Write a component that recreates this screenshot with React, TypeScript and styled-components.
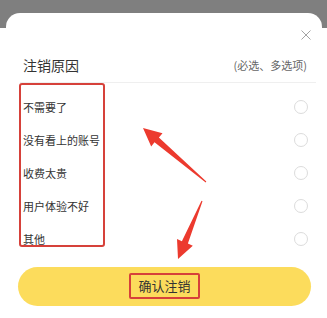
import styled, { createGlobalStyle } from 'styled-components';

const reasons = ['不需要了', '没有看上的账号', '收费太贵', '用户体验不好', '其他'];

const GlobalStyle = createGlobalStyle`
    body {
        margin: 0;
        background: #fff;
        font-family: "Noto Sans CJK SC", "Noto Sans", sans-serif;
    }
`

const App = () => {
    return (
        <Page>
            <GlobalStyle />
            <Sheet>
                <CloseRow>
                    <svg width="10" height="10" viewBox="0 0 10 10">
                        <path d="M0.5 0.5 L9.5 9.5 M9.5 0.5 L0.5 9.5" stroke="#a3a3a3" strokeWidth="1" fill="none" />
                    </svg>
                </CloseRow>
                <Header>
                    <Title>注销原因</Title>
                    <Hint>(必选、多选项)</Hint>
                </Header>
                <OptionList>
                    {reasons.map((r) => (
                        <Option key={r}>
                            <OptionText>{r}</OptionText>
                            <Radio />
                        </Option>
                    ))}
                </OptionList>
                <ConfirmButton>
                    <ButtonLabel>确认注销</ButtonLabel>
                </ConfirmButton>
                <MarkBox />
            </Sheet>
            <Arrows width="327" height="318" viewBox="0 0 327 318">
                <polygon
                    fill="#ec3a2e"
                    points="143,128 162.5,133.2 158.9,137.4 206.3,181.6 205.7,182.4 154.5,142.2 151.2,146.4"
                />
                <polygon
                    fill="#ec3a2e"
                    points="178,259 192.8,245.7 187.9,243.6 202.5,201.2 201.5,200.8 181.9,241.2 177,239.1"
                />
            </Arrows>
        </Page>
    );
}

const Page = styled.div`
    position: relative;
    width: 327px;
    height: 318px;
    overflow: hidden;
    padding: 13px 5px 0 6px;
    box-sizing: border-box;
    background: linear-gradient(#7f7f7f 0 28px, #fff 28px);
`

const Sheet = styled.div`
    position: relative;
    height: 100%;
    background: #fff;
    border-radius: 14px 14px 0 0;
    display: flex;
    flex-direction: column;
`

const CloseRow = styled.div`
    display: flex;
    justify-content: flex-end;
    padding: 17px 11px 0 0;
    height: 10px;
`

const Header = styled.div`
    display: flex;
    align-items: center;
    justify-content: space-between;
    margin: 15px 6px 0 14px;
    padding: 0 9px 7px 3px;
    border-bottom: 1px solid #efefef;
`

const Title = styled.div`
    font-size: 14px;
    line-height: 20px;
    color: #333;
`

const Hint = styled.div`
    font-size: 11px;
    line-height: 20px;
    color: #666;
`

const OptionList = styled.div`
    display: flex;
    flex-direction: column;
    padding-top: 8px;
`

const Option = styled.div`
    display: flex;
    align-items: center;
    justify-content: space-between;
    height: 32.8px;
    padding: 0 14px 0 17px;
`

const OptionText = styled.span`
    font-size: 11px;
    color: #333;
`

const Radio = styled.span`
    width: 14px;
    height: 14px;
    border-radius: 50%;
    border: 1px solid #dcdcdc;
    box-sizing: border-box;
`

const ConfirmButton = styled.div`
    display: flex;
    align-items: center;
    justify-content: center;
    height: 39px;
    margin: 12px 11px 0 12px;
    border-radius: 20px;
    background: #fcdc5c;
`

const ButtonLabel = styled.span`
    font-size: 13px;
    line-height: 22px;
    color: #333;
    padding: 0 7px;
    border: 2px solid #d6413a;
    border-radius: 2px;
`

const MarkBox = styled.div`
    position: absolute;
    left: 13px;
    top: 70px;
    width: 86px;
    height: 164px;
    box-sizing: border-box;
    border: 2px solid #d6413a;
    border-radius: 3px;
`

const Arrows = styled.svg`
    position: absolute;
    left: 0;
    top: 0;
    pointer-events: none;
`

export default App;
